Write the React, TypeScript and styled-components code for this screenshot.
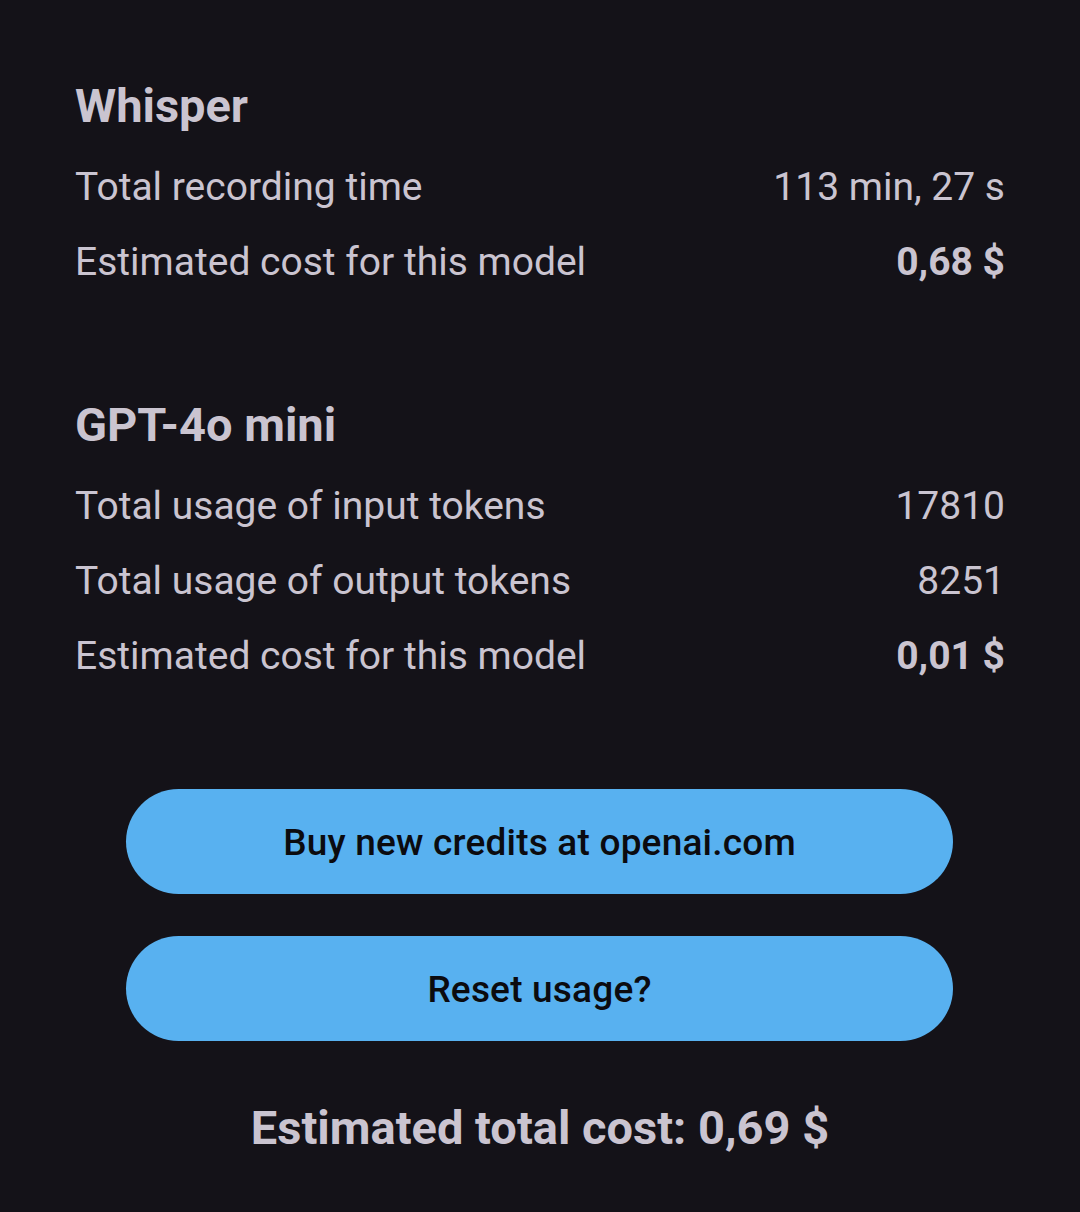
import React from 'react'
import styled, { createGlobalStyle } from 'styled-components'

const GlobalStyle = createGlobalStyle`
  html, body {
    margin: 0;
    padding: 0;
    background: #141218;
  }
  body {
    font-family: Roboto, "Noto Sans", sans-serif;
    color: #cac4d0;
  }
`

const Page = styled.div`
  min-height: 1212px;
  box-sizing: border-box;
  padding: 78px 75px 40px;
  display: flex;
  flex-direction: column;
`

const Section = styled.section`
  display: flex;
  flex-direction: column;
  & + & {
    margin-top: 98px;
  }
`

const Heading = styled.h2`
  margin: 0 0 15px;
  font-size: 47px;
  line-height: 56px;
  font-weight: 700;
  color: #cac4d0;
`

const Row = styled.div`
  display: flex;
  justify-content: space-between;
  align-items: center;
  height: 75px;
  font-size: 39px;
`

const Value = styled.span<{ $strong?: boolean }>`
  font-weight: ${({ $strong }) => ($strong ? 700 : 400)};
`

const Actions = styled.div`
  margin-top: 96px;
  padding: 0 52px 0 51px;
  display: flex;
  flex-direction: column;
  gap: 42px;
`

const PillButton = styled.button`
  height: 105px;
  border: none;
  border-radius: 53px;
  background: #58b1f0;
  color: #0b0b0f;
  font-family: Roboto, "Noto Sans", sans-serif;
  font-size: 37px;
  letter-spacing: 0.2px;
  font-weight: 500;
  padding-top: 3px;
  cursor: pointer;
`

const Total = styled.div`
  margin-top: 59px;
  text-align: center;
  font-size: 47px;
  line-height: 56px;
  font-weight: 700;
`

interface Stat {
  label: string
  value: string
  strong?: boolean
}

const models: { name: string; stats: Stat[] }[] = [
  {
    name: 'Whisper',
    stats: [
      { label: 'Total recording time', value: '113 min, 27 s' },
      { label: 'Estimated cost for this model', value: '0,68 $', strong: true },
    ],
  },
  {
    name: 'GPT-4o mini',
    stats: [
      { label: 'Total usage of input tokens', value: '17810' },
      { label: 'Total usage of output tokens', value: '8251' },
      { label: 'Estimated cost for this model', value: '0,01 $', strong: true },
    ],
  },
]

export default function App() {
  return (
    <>
      <GlobalStyle />
      <Page>
        {models.map(m => (
          <Section key={m.name}>
            <Heading>{m.name}</Heading>
            {m.stats.map(s => (
              <Row key={s.label}>
                <span>{s.label}</span>
                <Value $strong={s.strong}>{s.value}</Value>
              </Row>
            ))}
          </Section>
        ))}
        <Actions>
          <PillButton>Buy new credits at openai.com</PillButton>
          <PillButton>Reset usage?</PillButton>
        </Actions>
        <Total>Estimated total cost: 0,69 $</Total>
      </Page>
    </>
  )
}
